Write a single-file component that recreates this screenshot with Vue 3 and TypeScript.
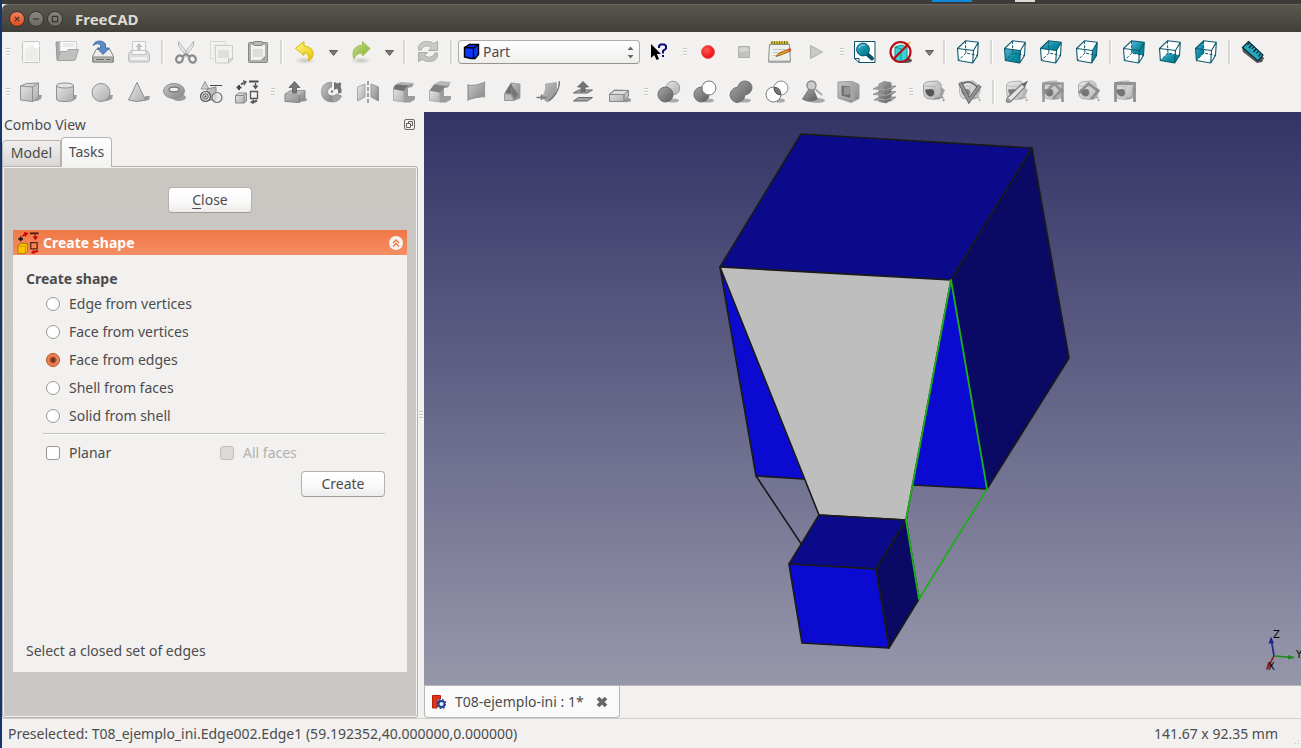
<script setup lang="ts">
import { ref } from 'vue'

type Item = { kind: 'handle' | 'sep' | 'icon' | 'drop' | 'combo'; id?: string; label?: string }

const icon = (id: string, label: string): Item => ({ kind: 'icon', id, label })
const sep: Item = { kind: 'sep' }
const handle: Item = { kind: 'handle' }

const toolbars: Item[][] = [
  [
    handle, icon('new', 'New'), icon('open', 'Open'), icon('save', 'Save'), icon('print', 'Print'),
    sep, icon('scissors', 'Cut'), icon('copy', 'Copy'), icon('paste', 'Paste'),
    sep, icon('undo', 'Undo'), { kind: 'drop', label: 'Undo history' },
    icon('redo', 'Redo'), { kind: 'drop', label: 'Redo history' },
    sep, icon('refresh', 'Refresh'), sep, { kind: 'combo' }, icon('help', "What's this?"),
    handle, icon('record', 'Record macro'), icon('stop', 'Stop macro'), icon('notes', 'Macros'), icon('play', 'Execute macro'),
    handle, icon('fit', 'Fit all'), icon('style', 'Draw style'), { kind: 'drop', label: 'Draw styles' },
    sep, icon('axo', 'Axonometric'), sep, icon('front', 'Front'), icon('top', 'Top'), icon('right', 'Right'),
    sep, icon('rear', 'Rear'), icon('bottom', 'Bottom'), icon('left', 'Left'), sep, icon('ruler', 'Measure distance'),
  ],
  [
    handle, icon('box', 'Box'), icon('cylinder', 'Cylinder'), icon('sphere', 'Sphere'), icon('cone', 'Cone'),
    icon('torus', 'Torus'), icon('primitives', 'Create primitives'), icon('builder', 'Shape builder'),
    handle, icon('extrude', 'Extrude'), icon('revolve', 'Revolve'), icon('mirror', 'Mirror'), icon('fillet', 'Fillet'),
    icon('chamfer', 'Chamfer'), icon('ruled', 'Ruled surface'), icon('loft', 'Loft'), icon('sweep', 'Sweep'),
    icon('offset', 'Offset'), icon('thickness', 'Thickness'),
    handle, icon('boolean', 'Boolean'), icon('cut', 'Cut shapes'), icon('union', 'Union'), icon('common', 'Intersection'),
    icon('check', 'Check geometry'), icon('section', 'Section'), icon('cross', 'Cross-sections'),
    handle, icon('linear', 'Measure linear'), icon('angular', 'Measure angular'), sep,
    icon('clear', 'Clear all'), icon('toggleall', 'Toggle all'), icon('toggle3d', 'Toggle 3D'), icon('toggledelta', 'Toggle delta'),
  ],
]

const viewCubes = [
  { id: 'axo', face: '' },
  { id: 'front', face: '1.5,8.5 17.5,10.5 16.7,23 2.4,20.5' },
  { id: 'top', face: '1.5,8.5 9.4,.8 22.3,2.3 17.5,10.5' },
  { id: 'right', face: '17.5,10.5 22.3,2.3 21.5,15.5 16.7,23' },
  { id: 'rear', face: '9.4,.8 22.3,2.3 21.5,15.5 9.9,13' },
  { id: 'bottom', face: '2.4,20.5 9.9,13 21.5,15.5 16.7,23' },
  { id: 'left', face: '1.5,8.5 9.4,.8 9.9,13 2.4,20.5' },
]

const modes = ['Edge from vertices', 'Face from vertices', 'Face from edges', 'Shell from faces', 'Solid from shell']
const mode = ref('Face from edges')
const planar = ref(false)
const workbench = ref('Part')
</script>

<template>
  <svg class="sprite" aria-hidden="true">
    <defs>
      <linearGradient id="gl" x1="0" y1="0" x2="1" y2="1"><stop offset="0" stop-color="#e6e6e6" /><stop offset="1" stop-color="#adadad" /></linearGradient>
      <linearGradient id="gm" x1="0" y1="0" x2="1" y2="1"><stop offset="0" stop-color="#c8c8c8" /><stop offset="1" stop-color="#858585" /></linearGradient>
      <linearGradient id="gd" x1="0" y1="0" x2="1" y2="1"><stop offset="0" stop-color="#a8a8a8" /><stop offset="1" stop-color="#5c5c5c" /></linearGradient>
      <linearGradient id="teal" x1="0" y1="0" x2="1" y2="1"><stop offset="0" stop-color="#5cb4d4" /><stop offset=".6" stop-color="#078aa0" /><stop offset="1" stop-color="#077e94" /></linearGradient>
      <linearGradient id="yel" x1="0" y1="0" x2="1" y2="1"><stop offset="0" stop-color="#fff58a" /><stop offset="1" stop-color="#e5c700" /></linearGradient>
      <linearGradient id="grn" x1="0" y1="0" x2="1" y2="1"><stop offset="0" stop-color="#c6dd8f" /><stop offset="1" stop-color="#84b027" /></linearGradient>
      <radialGradient id="red" cx=".4" cy=".35"><stop offset="0" stop-color="#ff5a52" /><stop offset="1" stop-color="#ec1c1c" /></radialGradient>
      <radialGradient id="shade"><stop offset="0" stop-color="#9a9a98" stop-opacity=".5" /><stop offset="1" stop-color="#9a9a98" stop-opacity="0" /></radialGradient>
    </defs>

    <symbol id="new" viewBox="0 0 24 24">
      <rect x="3.5" y="1.5" width="17" height="21" rx="1" fill="#f7f7f6" stroke="#c6c6c4" />
      <path d="M6 21V10L16 4h3v17z" fill="#ededeb" /><circle cx="17.500" cy="5.500" r="3" fill="#fff" />
    </symbol>
    <symbol id="open" viewBox="0 0 24 24">
      <path d="M1 2h7l2 2h10v16H2z" fill="#a9a9a7" stroke="#979795" />
      <path d="M5 1.500h16.500V12H5z" fill="#f8f8f8" stroke="#cfcfcf" /><path d="M8 4h11M8 6h11" stroke="#dcdcdc" />
      <path d="M5.500 11.500h6l2-2h10L20.500 19l-2 1.500h-16z" fill="#c0c0be" stroke="#a2a2a0" />
    </symbol>
    <symbol id="save" viewBox="0 0 24 24">
      <path d="M5 9.500h14l3.500 7v5.500h-21v-5.500z" fill="#ececea" stroke="#888a85" />
      <path d="M2 17h20v5H2z" fill="#b5b7b4" stroke="#888a85" /><path d="M5 19.500h8M15 19.500h5" stroke="#686a67" />
      <path d="M2 5.500C4-.5 12 0 14.500 4V8H18.500L12 14.500 6 8h3.500V5.500C8 3 5 3.500 2 5.500z" fill="#5d8cc4" stroke="#2f5f9e" stroke-width=".8" />
    </symbol>
    <symbol id="print" viewBox="0 0 24 24">
      <path d="M5.500 1.500h13V14h-13z" fill="#f6f6f6" stroke="#cacac8" />
      <path d="M4 10.500h16l2.500 4v5.500q0 2-2 2h-17q-2 0-2-2v-5.500z" fill="#ddd" stroke="#b9b9b7" />
      <path d="M5 10.500h14v4H5z" fill="#f7f7f6" stroke="#c5c5c3" /><path d="M12 3l3.500 4h-2v4h-3V7h-2z" fill="#bebebe" /><path d="M4 18.500h16" stroke="#f8f8f8" stroke-width="2" />
    </symbol>
    <symbol id="scissors" viewBox="0 0 24 24">
      <path d="M4.500 1.500q-1 4 2 7l7 9 2-1.500zM19.500 1.500q1 4-2 7l-7 9-2-1.500z" fill="#ececec" stroke="#adadab" stroke-width=".9" />
      <g fill="none" stroke="#8a8a8a" stroke-width="2.200"><ellipse cx="5.500" cy="19" rx="3.200" ry="3.700" transform="rotate(30 5.5 19)" /><ellipse cx="18.500" cy="19" rx="3.200" ry="3.700" transform="rotate(-30 18.5 19)" /></g>
      <path d="M8.500 16.500l3.500-2.500 3.500 2.500" stroke="#8a8a8a" stroke-width="1.600" fill="none" />
    </symbol>
    <symbol id="copy" viewBox="0 0 24 24">
      <path d="M.5 1.500h15v17H.5z" fill="#f4f4f3" stroke="#d6d6d4" /><path d="M3 5h9M3 8h7M3 11h4M3 14h4" stroke="#dcdcda" />
      <path d="M5.500 5.500h17V19l-4 4h-13z" fill="#f1f1f0" stroke="#cdcdcb" /><path d="M8 10h11v8H8z" fill="#dededd" /><path d="M18.500 23v-4h4z" fill="#fff" stroke="#b6b6b4" />
    </symbol>
    <symbol id="paste" viewBox="0 0 24 24">
      <rect x="2.500" y="2.500" width="19" height="20" rx="1" fill="#b0b0ae" stroke="#888886" /><path d="M5 5h14v15H5z" fill="#f2f2f1" />
      <path d="M7 9h10v8H7z" fill="#dcdcdb" /><path d="M15 20l4-4v4z" fill="#999" /><rect x="7.500" y="1.500" width="9" height="4" rx="1" fill="#b8b8b6" stroke="#858583" />
    </symbol>
    <symbol id="undo" viewBox="0 0 24 24">
      <ellipse cx="12" cy="20.500" rx="11" ry="3.500" fill="url(#shade)" />
      <path d="M2.500 8.500l8.500-7V6q10 1 9 9-.5 4-5 6 3-6-4-9v3.500z" fill="url(#yel)" stroke="#d9b800" />
    </symbol>
    <symbol id="redo" viewBox="0 0 24 24">
      <ellipse cx="12" cy="20.500" rx="11" ry="3.500" fill="url(#shade)" />
      <path d="M21 8.500l-7.500-7V5Q4 6 4 13.500q0 3 1 5.500 2-6 8.500-6v3z" fill="url(#grn)" stroke="#9fbf5b" />
    </symbol>
    <symbol id="refresh" viewBox="0 0 24 24">
      <path d="M2.500 10V7q1-5.500 9-5.500 4 0 6 2l4-2v9h-9l3-3q-5-4-10 1v1.500z" fill="#c9c9c8" stroke="#adadab" />
      <path d="M21.500 13v3q-1 5.500-9 5.500-4 0-6-2l-4 2v-9h9l-3 3q5 4 10-1V13z" fill="#c2c2c1" stroke="#adadab" />
    </symbol>
    <symbol id="help" viewBox="0 0 24 24">
      <path d="M4 4v14l3.200-3 2.400 5 2.400-1-2.200-5H14z" fill="#000" />
      <path d="M12 8V6l1.500-1.500h4L19 6v2.500L16 11v2.500M16 15v2" fill="none" stroke="#0b0b7c" stroke-width="2" />
    </symbol>
    <symbol id="record" viewBox="0 0 24 24"><circle cx="12" cy="12" r="6.500" fill="url(#red)" stroke="#f04c48" stroke-width=".8" /></symbol>
    <symbol id="stop" viewBox="0 0 24 24"><path d="M6.500 6.500h11v11h-11z" fill="#c1c1c0" stroke="#b1b1af" /><path d="M7.500 12V7.500h9V11z" fill="#d5d5d4" /></symbol>
    <symbol id="notes" viewBox="0 0 24 24">
      <path d="M1.500 4.500h20l1 17h-22z" fill="#eeeeec" stroke="#8b8d88" /><path d="M.500 20.500h22v2.500H.500z" fill="#aaa" />
      <path d="M2.500 1.500h18V4h-18z" fill="#d6c02a" /><path d="M4 1v3M6.500 1v3M9 1v3M11.500 1v3M14 1v3M16.500 1v3M19 1v3" stroke="#786800" />
      <path d="M5 9.500h13M5 12.500h5M5 15.500h5" stroke="#c4c4c2" /><path d="M8 16.500l3-3.500 10-4 1 2.300-10 4z" fill="#e89a25" stroke="#8b5a13" stroke-width=".8" /><path d="M20 9.300l2.500-1 1 2-2.500 1.300z" fill="#d9402e" />
    </symbol>
    <symbol id="play" viewBox="0 0 24 24"><path d="M6.500 5.500l12 6.500-12 6.500z" fill="#c9c9c8" stroke="#aeaeac" /></symbol>
    <symbol id="fit" viewBox="0 0 24 24">
      <path d="M1.500 1.500h20.500v21H6l-4.500-4z" fill="#fff" stroke="#0d5267" /><path d="M1.500 18.500h4.500v4" fill="none" stroke="#0d5267" />
      <path d="M13.500 13.500l5.500 5" stroke="#0b5368" stroke-width="4" stroke-linecap="round" /><circle cx="10" cy="9.500" r="6.400" fill="url(#teal)" stroke="#0b5368" /><path d="M6 8q2-4 6-3" stroke="#9bd8e8" fill="none" />
    </symbol>
    <symbol id="style" viewBox="0 0 24 24">
      <ellipse cx="17" cy="20.500" rx="6" ry="2.500" fill="#555" />
      <path d="M6 7l6-2 6 2v14l-6 1.500L6 21z" fill="#37d2d5" stroke="#16909a" /><path d="M6 7l6 2 6-2M12 9v13" fill="none" stroke="#16909a" /><path d="M13 10l8-8" stroke="#e4c63a" stroke-width="2" />
      <circle cx="11.500" cy="12" r="10" fill="none" stroke="#b01018" stroke-width="2.200" /><path d="M4.500 19L18.500 5" stroke="#b01018" stroke-width="2.200" />
    </symbol>
    <symbol v-for="c in viewCubes" :id="c.id" :key="c.id" viewBox="0 0 24 24">
      <path d="M1.500 8.500l8-7.700 12.800 1.500-.8 13.200-4.800 7.500-14.300-2.500z" fill="#fdfefe" />
      <polygon v-if="c.face" :points="c.face" fill="url(#teal)" />
      <path d="M1.500 8.500l8-7.700 12.800 1.500-4.800 8.200zM17.500 10.500l-.8 12.500-14.300-2.500-.9-12M16.700 23l4.800-7.500.8-13.200" fill="none" stroke="#10586c" stroke-width="1.100" stroke-linejoin="round" />
      <path d="M9.400.8l.5 12.200 11.600 2.500M9.900 13l-7.500 7.500" fill="none" stroke="#10586c" stroke-dasharray="3 1.500" />
    </symbol>
    <symbol id="ruler" viewBox="0 0 24 24">
      <path d="M1 8l1 4 14 11 5-1 2-4-3-3z" fill="#555" /><path d="M7.500 1.500l14.500 13.500-5 6L1.500 7.500z" fill="#2aa5bd" stroke="#062f3a" stroke-width="1.200" />
      <path d="M8 3l-1.500 2M10.500 5L8 8M12.500 7L11 9M15 9l-2.500 3M17 11.500l-1.500 2M19.500 13.500l-2 3" stroke="#021f28" stroke-width="1.200" />
    </symbol>

    <symbol id="box" viewBox="0 0 24 24">
      <path d="M14 21l5-6h4l-1 4-4 2z" fill="#9b9b9b" /><path d="M1.500 6l6-2.500L19.500 3v14.500L14 21.500 1.500 20z" fill="url(#gl)" stroke="#8f8f8f" /><path d="M1.500 6l12 1 6-4M13.500 7v14" fill="none" stroke="#8f8f8f" />
    </symbol>
    <symbol id="cylinder" viewBox="0 0 24 24">
      <path d="M12 21l6-6h4l-1 4-4 2z" fill="#9b9b9b" /><path d="M1.500 5v14q0 2.500 8.500 2.500t8.500-2.500V5" fill="url(#gl)" stroke="#8f8f8f" /><ellipse cx="10" cy="5.500" rx="8.500" ry="2.500" fill="#e3e3e3" stroke="#8f8f8f" />
    </symbol>
    <symbol id="sphere" viewBox="0 0 24 24"><path d="M11 21l7-6h4l-1 4-5 2z" fill="#9b9b9b" /><circle cx="10" cy="12.500" r="9" fill="url(#gl)" stroke="#8f8f8f" /></symbol>
    <symbol id="cone" viewBox="0 0 24 24"><path d="M12 21l7-5h4l-1 4-5 1z" fill="#9b9b9b" /><path d="M10 2.500L1.500 20q8.500 3 17 0z" fill="url(#gl)" stroke="#8f8f8f" /></symbol>
    <symbol id="torus" viewBox="0 0 24 24"><ellipse cx="16" cy="17.500" rx="7" ry="3.500" fill="#9b9b9b" /><ellipse cx="11" cy="11" rx="10.500" ry="7.500" fill="url(#gm)" stroke="#8f8f8f" /><ellipse cx="11" cy="9.500" rx="5" ry="2.300" fill="#f2f1f0" stroke="#777" stroke-width="1.300" /></symbol>
    <symbol id="primitives" viewBox="0 0 24 24">
      <path d="M6 1.500L2 9h8z" fill="#ccc" stroke="#999" /><path d="M11 5.500h12" stroke="#444" /><path d="M8 9l9-2v13H8z" fill="#bbb" stroke="#888" />
      <circle cx="6.500" cy="16.500" r="5" fill="#ddd" stroke="#555" stroke-width="1.200" /><circle cx="6.500" cy="16.500" r="2.700" fill="none" stroke="#555" /><circle cx="6.500" cy="16.500" r="1" fill="#444" /><circle cx="18" cy="17.500" r="5" fill="#e6e6e6" fill-opacity=".7" stroke="#777" stroke-width="1.200" />
    </symbol>
    <symbol id="builder" viewBox="0 0 24 24">
      <path d="M.5 15.500l3-2.500h8v8l-2.500 2H.5z" fill="url(#gl)" stroke="#888" /><path d="M.5 15.500H9V23M9 15.500l2.500-2.500" fill="none" stroke="#888" />
      <path d="M14 1.500h9.500" stroke="#4a4a4a" stroke-width="2" /><path d="M20.500 3v3" stroke="#555" stroke-width="1.400" /><path d="M17.500 5.500h6l-3 4z" fill="#555" /><path d="M15.500 11.500h7v7h-7z" fill="none" stroke="#555" stroke-width="1.300" />
      <path d="M4 5v5M1.500 7.500h5" stroke="#444" stroke-width="2" /><path d="M6 4.500L8.500 3" stroke="#555" stroke-width="2" /><path d="M8 0l4 1.500L9 6z" fill="#555" /><path d="M22 20.500l-3 1.500" stroke="#555" stroke-width="2" /><path d="M19 19v5l-4-1.500z" fill="#555" />
    </symbol>
    <symbol id="partbuilder" viewBox="0 0 24 24">
      <path d="M1 15l3-2.500h7.500V21L9 23.500H1z" fill="#ffc400" stroke="#a77900" /><path d="M1 15.500h8v8M9 15l2.500-2.500" fill="none" stroke="#c98f00" />
      <path d="M14 1.500h9.500" stroke="#501010" stroke-width="2" /><path d="M20 3v3" stroke="#c00" stroke-width="1.600" /><path d="M17 5h6l-3 4z" fill="#c00" /><path d="M15 11.500h7v7h-7z" fill="none" stroke="#5a2212" stroke-width="1.400" />
      <path d="M4 5v5M1.500 7.500h5" stroke="#111" stroke-width="1.800" /><path d="M6 4.500L9 2.500" stroke="#c00" stroke-width="1.800" /><path d="M7.500 0l5 1L9 5.500z" fill="#c00" /><path d="M23 20.500l-4 1.500" stroke="#c00" stroke-width="2" /><path d="M19 19v5l-4-1.500z" fill="#c00" />
    </symbol>

    <symbol id="extrude" viewBox="0 0 24 24"><ellipse cx="18" cy="19.500" rx="5" ry="2" fill="#999" /><path d="M1 14l6-3.500h14v7l-5.500 5L1 21.500z" fill="url(#gm)" stroke="#838383" /><path d="M1 14l6-3.500h14L15.500 15z" fill="#b9b9b9" stroke="#999" stroke-width=".7" /><path d="M15.500 15v7" stroke="#808080" /><path d="M10.500 1.500l5.500 6h-3.500v5.500h-4V7.500H5z" fill="#757575" stroke="#5c5c5c" stroke-width=".8" /></symbol>
    <symbol id="revolve" viewBox="0 0 24 24"><path d="M11.500 2Q1 3 1.500 12.500q.5 9 10.500 9.500v-6q-5-1-4.500-5Q8 8 11.500 7z" fill="url(#gm)" stroke="#8a8a8a" stroke-width=".8" /><path d="M12 16q3 0 4.500-2l5 2Q19 22 12 22z" fill="#a2a2a2" stroke="#8a8a8a" stroke-width=".8" /><path d="M14 2l4 1.500 1.500-1.500 2 2-1 2q1.500 3 1 7l-3.500.5q.5-3-1-5l-3 1.500z" fill="#717171" /><circle cx="12" cy="11.500" r="1.200" fill="#777" /></symbol>
    <symbol id="mirror" viewBox="0 0 24 24"><path d="M1.500 7L9 4v13l-7.500 4z" fill="url(#gl)" stroke="#999" stroke-width=".8" /><path d="M15 4l7.500 3v14L15 17z" fill="url(#gm)" stroke="#888" stroke-width=".8" /><path d="M12 1v22" stroke="#a0a0a0" stroke-width="2" stroke-dasharray="4 2" /></symbol>
    <symbol id="fillet" viewBox="0 0 24 24"><path d="M12 12V9q1-4 6-6l4 .5-2 3.500-4 1v8h7v3.500l-5 3h-6z" fill="#9c9c9c" /><path d="M1.500 9l10.500 2v11l-10.500-1.500z" fill="url(#gl)" stroke="#a2a2a2" stroke-width=".8" /><path d="M1.500 9q0-5 7-7l14 1q-9 1-10.500 8z" fill="#b4b4b4" /><path d="M1.500 9q0-3 3-4.500l13 1q-4 1-5.500 5.500z" fill="#717171" /></symbol>
    <symbol id="chamfer" viewBox="0 0 24 24"><path d="M12 12l5-8 5 0-2 3.500-4 .5v8h7v3.500l-5 3h-6z" fill="#9c9c9c" /><path d="M1.500 10.500l10 1.500v10l-10-1.500z" fill="url(#gl)" stroke="#a2a2a2" stroke-width=".8" /><path d="M6 4.500l6-3 10.500 1-4.500 3.500z" fill="#bbb" stroke="#a5a5a5" stroke-width=".7" /><path d="M1.500 10.500L6 4.500l12 1.500-6 6.500z" fill="#808080" /></symbol>
    <symbol id="ruled" viewBox="0 0 24 24"><path d="M4.500 5.500Q12 6 20.500 2.500v14Q12 17 4.500 19.500z" fill="url(#gm)" stroke="#8e8e8e" /><path d="M4 4v17M20.500 1.500v16" stroke="#999" stroke-width="1.200" /></symbol>
    <symbol id="loft" viewBox="0 0 24 24"><path d="M5 13l6-10 9 1v14l-6 2.500H5z" fill="url(#gm)" stroke="#999" stroke-width=".8" /><path d="M5 13l6-10 1 3-1.500 8z" fill="#707070" /><path d="M12 6l6 8-3 5-4-6z" fill="#757575" /><path d="M4.500 14h6l3.500 6.500H4.500z" fill="#bdbdbd" stroke="#8e8e8e" stroke-width=".8" /></symbol>
    <symbol id="sweep" viewBox="0 0 24 24"><path d="M9.500 4l11-1.500q1 15-9 19.500l-7-5q6-3 5-13z" fill="url(#gm)" stroke="#a5a5a5" stroke-width=".8" /><path d="M13 7q0 9-5 12M17 6q1 9-6 15" stroke="#a8a8a8" fill="none" /><path d="M23.500 1q0 12-11 20" fill="none" stroke="#777" stroke-width="1.400" /><path d="M.5 17.500h10M5.500 14.500v5.500" stroke="#777" stroke-width="1.400" /></symbol>
    <symbol id="offset" viewBox="0 0 24 24"><path d="M1.500 21l5-3.500h14l-5 3.500zM1.500 13l5-3h14l-5 3z" fill="#a2a2a2" stroke="#666" /><path d="M11 1.500l5.500 5.500h-3.500v4.500h-4V7H5.500z" fill="#747474" stroke="#5e5e5e" stroke-width=".8" /></symbol>
    <symbol id="thickness" viewBox="0 0 24 24"><ellipse cx="18" cy="20" rx="5" ry="2.200" fill="#999" /><path d="M1.500 14l5-4 14 .500v6L16 21.500H1.500z" fill="url(#gl)" stroke="#888" /><path d="M1.500 14.500l5-4h14l-4.500 4z" fill="#ddd" stroke="#888" /><path d="M16 15v6" stroke="#777" /></symbol>

    <symbol id="boolean" viewBox="0 0 24 24"><ellipse cx="16" cy="20.500" rx="6" ry="2" fill="#aaa" /><circle cx="16" cy="8" r="6.800" fill="url(#gl)" stroke="#999" /><circle cx="8.500" cy="14.500" r="7.500" fill="url(#gd)" stroke="#6a6a6a" /></symbol>
    <symbol id="cut" viewBox="0 0 24 24"><ellipse cx="15" cy="20.500" rx="6" ry="2" fill="#aaa" /><circle cx="8.500" cy="14.500" r="7.500" fill="url(#gd)" stroke="#6a6a6a" /><circle cx="16" cy="8" r="7" fill="#fff" stroke="#777" /></symbol>
    <symbol id="union" viewBox="0 0 24 24"><ellipse cx="16" cy="20.500" rx="6" ry="2" fill="#aaa" /><path d="M9 7q1-6 7.500-6 6.500 1 6.500 7-1 6-7 7-1 7-8 7.500-6-1-7-7.500 1-7 8-8z" fill="url(#gd)" stroke="#707070" /></symbol>
    <symbol id="common" viewBox="0 0 24 24"><ellipse cx="15" cy="20.500" rx="5" ry="2" fill="#aaa" /><circle cx="8.500" cy="14.500" r="7.500" fill="#fff" stroke="#777" /><circle cx="16" cy="8" r="7" fill="#fff" stroke="#888" /><path d="M9 7.500q6-1 7 7-6 1-7-7z" fill="#777" stroke="#555" /></symbol>
    <symbol id="check" viewBox="0 0 24 24"><ellipse cx="16" cy="20.500" rx="8" ry="2.500" fill="#aaa" /><path d="M8 9L1.500 19q7 4.500 15 0L12 9z" fill="url(#gd)" stroke="#777" /><circle cx="10.500" cy="5.500" r="4.500" fill="#ccc" stroke="#888" stroke-width="1.400" /><path d="M14 9l7 6" stroke="#aaa" stroke-width="2" /></symbol>
    <symbol id="section" viewBox="0 0 24 24"><path d="M1 2l14-.5 7 3v14l-8 4L1 18z" fill="url(#gm)" stroke="#999" /><path d="M4 5l10 1v13L4 16z" fill="#6f6f6f" stroke="#bbb" /><path d="M7 7h7v7l-7 1z" fill="#979797" /><path d="M16.500 3v18" stroke="#a5a5a5" stroke-width="2" /></symbol>
    <symbol id="cross" viewBox="0 0 24 24"><path d="M0 9l6-3h17l-5 4zM0 14.500l6-3h17l-5 4zM1 20l5-3h17l-5 4z" fill="#a5a5a5" stroke="#8a8a8a" stroke-width=".8" /><path d="M6 4l5-2.500 7 1V20l-5 3-7-1.500z" fill="url(#gd)" stroke="#888" stroke-width=".8" /><path d="M6 9l7 1 5-2M6 14.500l7 1 5-2M6 19l7 1 5-2" fill="none" stroke="#aaa" /><path d="M13 5v18" stroke="#777" /></symbol>

    <symbol id="linear" viewBox="0 0 24 24"><path d="M14 18l5-11 4 3-3 7-4 3z" fill="#a3a3a3" /><path d="M1.500 5q1-3 5-3.500l9-.5 3.500 3q1 7-1 13l-5 2.500-8-1q-3-1-3.500-6z" fill="url(#gl)" stroke="#999" stroke-width=".9" /><path d="M2 6l10 .5 1 12M12 6.500L17.500 3" fill="none" stroke="#b0b0b0" /><path d="M3 9.500l7-.5q2.500 1 2 5-1 3-4 2.500Q3.500 15 3 9.500z" fill="#555" /><path d="M13.500 18.500l7-1 1.500 3.500" fill="none" stroke="#8a8a8a" stroke-width="1.800" stroke-dasharray="2 1" /></symbol>
    <symbol id="angular" viewBox="0 0 24 24"><use href="#linear" opacity=".7" /><path d="M2 2.500l9 18L22 5.500" fill="none" stroke="#626262" stroke-width="4" /><path d="M2 2.500l9 18L22 5.500" fill="none" stroke="#939393" stroke-width="2.400" /><path d="M4 4q8-5 15 3" fill="none" stroke="#666" stroke-width="1.500" /></symbol>
    <symbol id="clear" viewBox="0 0 24 24"><use href="#linear" opacity=".75" /><path d="M2.500 17.500L17 4l3 3L6 21.500q-3 2-4.500 0-.5-2 1-4z" fill="#e2e2e2" stroke="#777" stroke-width="1.100" /><path d="M17 4l6-3.500L20 7z" fill="#666" /><circle cx="3.500" cy="20.500" r="2" fill="#999" /></symbol>
    <symbol id="toggleall" viewBox="0 0 24 24"><use href="#linear" opacity=".8" /><path d="M2.500 22V3.500h19V22M4 13L13 3.500l7 7-8 8" fill="none" stroke="#8a8a8a" stroke-width="2.600" stroke-opacity=".85" /></symbol>
    <symbol id="toggle3d" viewBox="0 0 24 24"><use href="#linear" opacity=".8" /><path d="M2 13L11.500 3.500 21 11l-7 8" fill="none" stroke="#868686" stroke-width="2.600" stroke-opacity=".85" /></symbol>
    <symbol id="toggledelta" viewBox="0 0 24 24"><use href="#linear" opacity=".8" /><path d="M2.500 22V3.500h19V22" fill="none" stroke="#8a8a8a" stroke-width="2.800" stroke-opacity=".9" /></symbol>
  </svg>

  <div class="app">
    <div class="desktop-strip"></div>
    <header class="titlebar">
      <button class="wm close" aria-label="Close window"><svg viewBox="0 0 16 16"><path d="M5.500 5.500l5 5M10.500 5.500l-5 5" /></svg></button>
      <button class="wm" aria-label="Minimize"><svg viewBox="0 0 16 16"><path d="M4.500 8h7" /></svg></button>
      <button class="wm" aria-label="Maximize"><svg viewBox="0 0 16 16"><path d="M5 5h6v6H5z" /></svg></button>
      <h1>FreeCAD</h1>
    </header>

    <nav v-for="(bar, b) in toolbars" :key="b" class="toolbar" aria-label="Toolbar">
      <template v-for="(item, i) in bar" :key="i">
        <span v-if="item.kind === 'handle'" class="handle"></span>
        <span v-else-if="item.kind === 'sep'" class="sep"></span>
        <button v-else-if="item.kind === 'drop'" class="drop" :aria-label="item.label"><svg viewBox="0 0 9 6"><path d="M.5.500h8L4.500 5.500z" fill="#7d7b78" stroke="#5e5c59" /></svg></button>
        <span v-else-if="item.kind === 'combo'" class="combo">
          <svg class="combo-icon" viewBox="0 0 17 17"><path d="M1.500 4.500l5-3h9v10l-3.500 4H8L1.500 14z" fill="#0a36ff" stroke="#000" stroke-width="1.400" /><path d="M1.500 4.500l9 .5v10.500M10.500 5l5-3.500" fill="none" stroke="#000" stroke-width="1.400" /></svg>
          <select v-model="workbench" aria-label="Workbench"><option>Part</option></select>
          <svg class="combo-arrows" viewBox="0 0 7 13"><path d="M.5 4l3-3.500 3 3.500zM.5 9l3 3.500 3-3.500z" fill="#6a6865" /></svg>
        </span>
        <button v-else class="tool" :aria-label="item.label"><svg><use :href="'#' + item.id" /></svg></button>
      </template>
    </nav>

    <main class="work">
      <aside class="dock">
        <div class="dock-title">
          <h2>Combo View</h2>
          <button class="float" aria-label="Float panel"><svg viewBox="0 0 11 11"><rect x=".5" y=".5" width="10" height="10" rx="1.500" /><path d="M2.500 4.500h4v4h-4zM4.500 4.500v-2h4v4h-2" /></svg></button>
        </div>
        <div class="tabs" role="tablist">
          <button role="tab" aria-selected="false">Model</button>
          <button role="tab" aria-selected="true" class="active">Tasks</button>
        </div>
        <div class="pane">
          <button class="push close-task"><u>C</u>lose</button>
          <section class="task">
            <header class="task-head">
              <svg class="task-icon"><use href="#partbuilder" /></svg>
              <h3>Create shape</h3>
              <button class="fold" aria-label="Collapse"><svg viewBox="0 0 14 14"><circle cx="7" cy="7" r="7" fill="#f6f3f0" /><path d="M4 7l3-3 3 3M4 10.500l3-3 3 3" fill="none" stroke="#ef7445" stroke-width="1.400" /></svg></button>
            </header>
            <div class="task-body">
              <fieldset>
                <legend>Create shape</legend>
                <label v-for="m in modes" :key="m" class="option"><input v-model="mode" type="radio" name="mode" :value="m" />{{ m }}</label>
              </fieldset>
              <hr />
              <div class="checks">
                <label class="option"><input v-model="planar" type="checkbox" />Planar</label>
                <label class="option disabled"><input type="checkbox" disabled />All faces</label>
              </div>
              <button class="push create">Create</button>
              <p class="hint">Select a closed set of edges</p>
            </div>
          </section>
        </div>
      </aside>
      <div class="splitter"><span></span></div>

      <section class="document">
        <div class="viewport">
          <svg class="scene" viewBox="0 0 877 573" role="img" aria-label="3D model">
            <g stroke-linejoin="round" stroke-linecap="round">
              <g stroke="#1a1a1a" stroke-width="1.600">
                <path d="M296 155l81-133 231 14-81 132z" fill="#0a0a8a" />
                <path d="M527 168l81-132 37 210-82 131z" fill="#0a0a64" />
                <path d="M296 155l231 13 36 209-74-4-109-6-48-3z" fill="#0a0ad0" stroke="none" />
                <path d="M296 155l36 209 48 3M489 373l74 4M332 364l46 69" fill="none" />
              </g>
              <path d="M296 155l231 13-45 240-87-5z" fill="#bebebe" stroke="#1a1a1a" stroke-width="1.600" />
              <g stroke="#1a1a1a" stroke-width="1.600">
                <path d="M365 452l30-49 87 5-30 49z" fill="#0a0a8a" />
                <path d="M452 457l30-49 13 79-30 49z" fill="#0a0a64" />
                <path d="M365 452l87 5 13 79-87-5z" fill="#0a0ad0" />
              </g>
              <path d="M482 408l45-240 36 209-68 110z" fill="none" stroke="#1cae1c" stroke-width="1.800" />
            </g>
          </svg>
          <svg class="axes" viewBox="0 0 36 42" aria-hidden="true">
            <path d="M9 26L6 8" stroke="#24248c" stroke-width="1.600" /><path d="M3.500 13.500L6 7l3 6z" fill="#24248c" />
            <path d="M9 26l20 1.500" stroke="#1f8a1f" stroke-width="1.600" /><path d="M23 25l7 2.500-7 2z" fill="#1f8a1f" />
            <path d="M9 26l-7 13" stroke="#8c2024" stroke-width="1.600" /><path d="M3 32l4 3-6 5z" fill="#8c2024" />
            <text x="8" y="8">Z</text><text x="31" y="28">Y</text><text x="3" y="40">X</text>
          </svg>
        </div>
        <div class="doc-tabs">
          <div class="doc-tab">
            <svg class="doc-icon" viewBox="0 0 14 14"><path d="M.5.500h8V4H5v2h3v3H5v4H.5z" fill="#e2331c" stroke="#b3200d" /><circle cx="9.500" cy="9" r="3" fill="#e8edf6" stroke="#1f3f94" stroke-width="1.800" /><circle cx="9.500" cy="9" r="4.400" fill="none" stroke="#1f3f94" stroke-width="1.400" stroke-dasharray="1.700 1.750" /></svg>
            <span>T08-ejemplo-ini : 1*</span>
            <button class="doc-close" aria-label="Close document"><svg viewBox="0 0 12 12"><path d="M2 2l8 8M10 2l-8 8" stroke="#666" stroke-width="3.800" /></svg></button>
          </div>
        </div>
      </section>
    </main>

    <footer class="status">
      <span>Preselected: T08_ejemplo_ini.Edge002.Edge1 (59.192352,40.000000,0.000000)</span>
      <span class="dims">141.67 x 92.35 mm</span>
      <span class="grip"></span>
    </footer>
  </div>
</template>

<style>
body { margin: 0; background: #f2f1f0; }
</style>

<style scoped>
* { box-sizing: border-box; }
.sprite { position: absolute; width: 0; height: 0; }
.app {
  display: flex;
  flex-direction: column;
  height: 100vh;
  overflow: hidden;
  border-left: 2px solid #15356f;
  background: #f2f1f0;
  color: #4c4c4c;
  font: 14px/20px "Noto Sans", "Open Sans", sans-serif;
}
button { padding: 0; border: 0; background: none; color: inherit; font: inherit; }
h1, h2, h3, p { margin: 0; font-size: inherit; font-weight: normal; }
svg { display: block; }

.desktop-strip {
  flex: none;
  height: 4px;
  background:
    linear-gradient(#0d88d8, #0d88d8) 930px 0 / 40px 2px no-repeat,
    linear-gradient(#dedbd4, #dedbd4) 1013px 0 / 20px 2px no-repeat,
    #3c3b37;
}
.titlebar {
  display: flex;
  align-items: center;
  gap: 3px;
  flex: none;
  height: 28px;
  padding-left: 7px;
  border-top: 1px solid #66645c;
  border-radius: 6px 0 0;
  background: linear-gradient(#5a574e, #403f3a);
}
.titlebar h1 { margin-left: 9px; color: #dfdbd2; font-size: 15px; font-weight: bold; }
.wm { width: 16px; height: 16px; border: 1px solid #34332f; border-radius: 50%; background: linear-gradient(#8a8880, #6a6860); }
.wm.close { background: linear-gradient(#f5825c, #df4a1b); }
.wm svg { width: 14px; height: 14px; fill: none; stroke: #35342f; stroke-width: 1.3; }

.toolbar { display: flex; align-items: center; flex: none; height: 40px; }
.handle { flex: none; width: 13px; height: 8px; padding: 0 3px 0 6px; }
.handle:first-child { width: 11px; padding-left: 4px; }
.handle::before { content: ""; display: block; height: 8px; background: repeating-linear-gradient(#c9c7c4 0 1px, #fbfbfa 1px 2px, transparent 2px 3px); }
.sep { flex: none; width: 11px; height: 24px; }
.sep::before { content: ""; display: block; width: 2px; height: 24px; margin: 0 auto; border-right: 1px solid #fcfcfb; background: #d9d7d5; }
.tool { flex: none; width: 36px; height: 36px; }
.tool svg { width: 24px; height: 24px; margin: 0 auto; }
.drop { flex: none; width: 20px; height: 24px; }
.drop svg { width: 9px; height: 6px; margin: 2px auto 0; }
.combo { position: relative; flex: none; width: 182px; margin: 0 1px; }
.combo select {
  display: block;
  width: 100%;
  height: 24px;
  padding: 0 24px;
  border: 1px solid #aeaba7;
  border-bottom-color: #97938f;
  border-radius: 4px;
  background: linear-gradient(#fff, #efeeed);
  color: inherit;
  font: inherit;
  line-height: 20px;
  appearance: none;
}
.combo-icon { position: absolute; top: 3px; left: 5px; width: 17px; height: 17px; }
.combo-arrows { position: absolute; top: 6px; right: 6px; width: 7px; height: 13px; }

.work { display: flex; flex: 1; min-height: 0; }
.dock { display: flex; flex-direction: column; flex: none; width: 416px; }
.dock-title { display: flex; align-items: center; justify-content: space-between; height: 25px; padding: 0 3px 0 2px; }
.float svg { width: 11px; height: 11px; fill: none; stroke: #6a6865; }
.tabs { display: flex; align-items: flex-end; height: 30px; margin-bottom: -1px; z-index: 1; }
.tabs button { width: 59px; height: 27px; padding-bottom: 2px; border: 1px solid #b7b4b0; border-radius: 4px 0 0; background: linear-gradient(#f0efee, #d9d7d5); }
.tabs .active { width: 51px; height: 30px; border-bottom: 0; border-radius: 4px 4px 0 0; background: linear-gradient(#fdfdfd, #f4f3f2); }
.pane {
  display: flex;
  flex-direction: column;
  flex: 1;
  padding: 20px 10px 45px;
  border: 1px solid #b2afab;
  border-radius: 0 3px 3px;
  background: linear-gradient(#cac6c2, #c9c8c6);
  box-shadow: inset 0 0 0 1px #f4f3f2;
}
.push {
  height: 26px;
  border: 1px solid #b3b0ad;
  border-bottom-color: #9f9c99;
  border-radius: 4px;
  background: linear-gradient(#fff, #fafafa 55%, #ececeb);
}
.close-task { width: 84px; margin: 0 auto 17px; }
.close-task u { text-underline-offset: 3px; }
.task { display: flex; flex: 1; flex-direction: column; background: #f2f1f0; }
.task-head { display: flex; align-items: center; height: 25px; padding: 0 4px; background: linear-gradient(#f07746, #f58e64); color: #fff; }
.task-icon { width: 22px; height: 22px; margin-right: 4px; }
.task-head h3 { flex: 1; font-weight: bold; }
.fold svg { width: 14px; height: 14px; }
.task-body { display: flex; flex: 1; flex-direction: column; padding: 14px 22px 11px 13px; }
fieldset { margin: 0; padding: 0; border: 0; }
legend { padding: 0 0 1px; font-weight: bold; }
.option { display: flex; align-items: center; height: 28px; padding-left: 20px; }
.option input {
  flex: none;
  width: 14px;
  height: 14px;
  margin: 0 9px 0 0;
  border: 1px solid #999693;
  border-radius: 3px;
  background: #fff;
  appearance: none;
}
.option input[type="radio"] { border-radius: 50%; }
.option input[type="radio"]:checked { border-color: #b54e26; background: radial-gradient(circle, #733a25 0 2px, #f17e53 4px); }
.option.disabled { padding-left: 0; color: #b3b0ad; }
.option.disabled input { border-color: #c0bdba; background: #dddbd9; }
hr { width: calc(100% - 17px); height: 2px; margin: 3px 0 4px 17px; border: 0; border-top: 1px solid #c6c4c1; background: #fcfcfc; }
.checks { display: grid; grid-template-columns: 194px 1fr; }
.create { align-self: flex-end; width: 84px; margin-top: 4px; }
.hint { margin-top: auto; }

.splitter { display: flex; align-items: center; justify-content: center; flex: none; width: 6px; }
.splitter span { width: 4px; height: 8px; background: repeating-linear-gradient(#c5c3c0 0 1px, #fbfbfa 1px 2px, transparent 2px 3px); }

.document { display: flex; flex: 1; flex-direction: column; min-width: 0; }
.viewport { position: relative; flex: 1; min-height: 0; background: linear-gradient(#333366, #9797ab); }
.scene { width: 100%; height: 100%; }
.axes { position: absolute; right: 0; bottom: 13px; width: 36px; height: 42px; font: 10px "DejaVu Sans", sans-serif; }
.doc-tabs { flex: none; height: 33px; border-top: 1px solid #b9b6b3; }
.doc-tab {
  display: flex;
  align-items: center;
  width: 196px;
  height: 32px;
  padding: 0 11px 0 7px;
  border: 1px solid #b9b6b3;
  border-top: 0;
  border-radius: 0 0 4px 4px;
  background: #fafafa;
}
.doc-icon { width: 14px; height: 14px; margin-right: 9px; }
.doc-tab span { flex: 1; white-space: nowrap; }
.doc-close svg { width: 12px; height: 12px; }

.status { position: relative; display: flex; align-items: center; flex: none; height: 30px; padding: 0 23px 0 6px; border-top: 1px solid #d2d0cd; white-space: nowrap; }
.dims { margin-left: auto; }
.grip { position: absolute; right: 0; bottom: 2px; width: 10px; height: 10px; background: radial-gradient(circle, #c4c2bf 1px, transparent 1px) 0 0 / 3px 3px; clip-path: polygon(100% 0, 100% 100%, 0 100%); }
</style>
